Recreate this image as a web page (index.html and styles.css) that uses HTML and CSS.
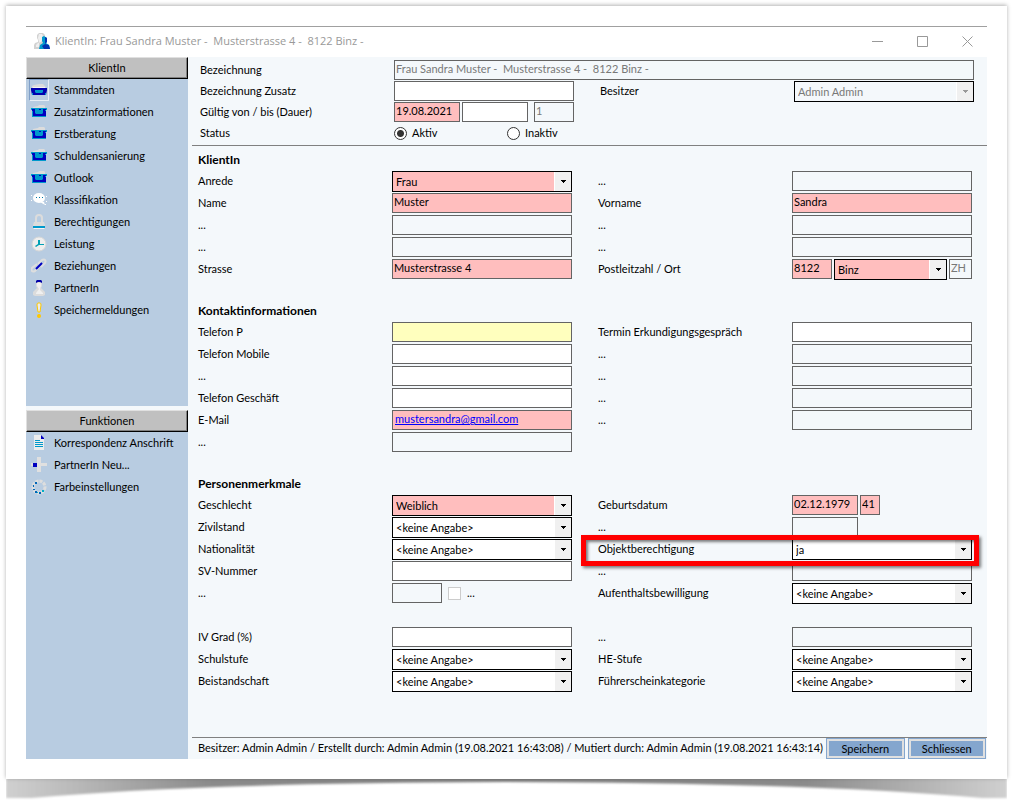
FILE: index.html
```
<!DOCTYPE html>
<html lang="de">
<head>
    <meta charset="UTF-8">
    <meta name="viewport" content="width=device-width, initial-scale=1.0">
    <title>KlientIn: Frau Sandra Muster</title>
    <link rel="stylesheet" href="styles.css">
</head>
<body>
    <svg class="defs" width="0" height="0" aria-hidden="true">
        <symbol id="folder" viewBox="0 0 16 16">
            <path d="M2 4V3l5-1 1-1h5l1 1v2z" fill="#dcdcdc"/>
            <path d="M0 4h16v2h-1v7H1V6H0z" fill="#0099cc"/>
            <path d="M1 5h14v1h-1v1h1v5H2V7H1z" fill="#0000c0"/>
            <path d="M4 5h4v1h2V5h2v4l-1 1H5L4 9z" fill="#0099cc"/>
        </symbol>
        <symbol id="folder-open" viewBox="0 0 16 16">
            <path d="M1 6V4l2-1 5-1h4l2 2 1 2z" fill="#dcdcdc"/>
            <path d="M2 5h12v1H2z" fill="#f4f4f4"/>
            <path d="M0 6h16v2l-1 5H1L0 8z" fill="#0000b0"/>
            <path d="M4 8h8v2l-1 1H5l-1-1zM1 11h1v2H1zM14 11h1v2h-1z" fill="#0099cc"/>
        </symbol>
    </svg>

    <div class="paper">
        <div class="window">
            <header class="titlebar">
                <svg class="app-icon" viewBox="0 0 16 16" aria-hidden="true">
                    <path d="M5 0h4l2 2v4l-1 2 2 2v6H0v-4l1-2 3-1V7L3 5V2z" fill="#d2d2d2"/>
                    <path d="M5 1h3l1 2v3L7 9l-3 1-2 2v2h3V9l-1-4z" fill="#efefef"/>
                    <path d="M8 4l2-1 3 2v4l-1 1 3 2 1 4H5l1-4 3-2-1-2z" fill="#0099cc"/>
                    <path d="M11 4l2 1v4l-1 1-1 1zM11 11l4 1 1 4h-6l-2-3z" fill="#0033b0"/>
                </svg>
                <h1>KlientIn: Frau Sandra Muster -&nbsp; Musterstrasse 4 -&nbsp; 8122 Binz -</h1>
                <div class="window-buttons">
                    <button type="button" aria-label="Minimieren"><svg viewBox="0 0 11 11"><path d="M0 5.500h11"/></svg></button>
                    <button type="button" aria-label="Maximieren"><svg viewBox="0 0 11 11"><path d="M.5.5h10v10H.5z"/></svg></button>
                    <button type="button" aria-label="Fenster schliessen"><svg viewBox="0 0 11 11"><path d="M.5.5l10 10M10.500.5l-10 10"/></svg></button>
                </div>
            </header>

            <div class="body">
                <nav class="sidebar">
                    <section class="panel">
                        <h2>KlientIn</h2>
                        <ul>
                            <li><a href="#" class="active"><svg><use href="#folder-open"/></svg>Stammdaten</a></li>
                            <li><a href="#"><svg><use href="#folder"/></svg>Zusatzinformationen</a></li>
                            <li><a href="#"><svg><use href="#folder"/></svg>Erstberatung</a></li>
                            <li><a href="#"><svg><use href="#folder"/></svg>Schuldensanierung</a></li>
                            <li><a href="#"><svg><use href="#folder"/></svg>Outlook</a></li>
                            <li><a href="#">
                                <svg viewBox="0 0 16 16">
                                    <ellipse cx="8" cy="6" rx="6" ry="5" fill="#fff"/>
                                    <path d="M9 10h4l1 3zM0 3h1v1H0zM0 8h1v1H0zM15 4h1v1h-1zM15 9h1v1h-1zM14 12h1v1h-1z" fill="#fff"/>
                                    <path d="M5 5h1v1H5zM8 5h1v1H8zM11 5h1v1h-1z" fill="#0077a8"/>
                                </svg>Klassifikation</a></li>
                            <li><a href="#">
                                <svg viewBox="0 0 16 16">
                                    <path d="M5 8V4q0-3 3-3t3 3v4" fill="none" stroke="#dcdcdc" stroke-width="2"/>
                                    <path d="M3 8h10l1 3v4H2v-4z" fill="#dcdcdc"/>
                                    <path d="M2 12h12v2H2z" fill="#0099cc"/>
                                    <path d="M3 14h10v1H3z" fill="#f4f4f4"/>
                                </svg>Berechtigungen</a></li>
                            <li><a href="#">
                                <svg viewBox="0 0 16 16">
                                    <circle cx="8" cy="8" r="7" fill="#eee" stroke="#d6d6d6"/>
                                    <path d="M7 4h2v4h4v1H8L5 11l-1-1 3-2z" fill="#00a0b4"/>
                                </svg>Leistung</a></li>
                            <li><a href="#">
                                <svg viewBox="0 0 16 16">
                                    <path d="M7 6l4-4q2-1 3 0t0 3l-4 4M9 8l-5 5q-2 1-3 0t0-3l5-4" fill="none" stroke="#dedede" stroke-width="2"/>
                                    <path d="M5 11l6-6" fill="none" stroke="#0000c0" stroke-width="2"/>
                                </svg>Beziehungen</a></li>
                            <li><a href="#">
                                <svg viewBox="0 0 16 16">
                                    <path d="M5 2h6v4l-1 2 4 4v3l-2 1H4l-2-1v-3l4-4-1-2z" fill="#dcdcdc"/>
                                    <path d="M6 3h4v3L9 8v2l3 3v1H5v-1l3-4-2-3z" fill="#f0f0f0"/>
                                    <path d="M5 3V1l1-1h4l1 1v2l-2-1H7z" fill="#0000a8"/>
                                </svg>PartnerIn</a></li>
                            <li><a href="#">
                                <svg viewBox="0 0 16 16">
                                    <path d="M7 1h2q1 0 1 2L9 10H7L6 3q0-2 1-2z" fill="#ececec" stroke="#ffc800"/>
                                    <circle cx="8" cy="14" r="2" fill="#ffc800"/>
                                </svg>Speichermeldungen</a></li>
                        </ul>
                    </section>
                    <section class="panel">
                        <h2>Funktionen</h2>
                        <ul>
                            <li><a href="#">
                                <svg viewBox="0 0 16 16">
                                    <path d="M3 0h7l3 3v12H3z" fill="#ececec"/>
                                    <path d="M10 0l3 3v1h-3z" fill="#0000c0"/>
                                    <path d="M4 5h5v1H4zM4 7h8v1H4zM4 9h8v1H4zM4 11h8v1H4z" fill="#0099cc"/>
                                </svg>Korrespondenz Anschrift</a></li>
                            <li><a href="#">
                                <svg viewBox="0 0 16 16">
                                    <path d="M6 0h4v6h6v3h-6v6H6V9H0V6h6z" fill="#e0e0e0"/>
                                    <path d="M2 6h4v4H2z" fill="#0000c0"/>
                                </svg>PartnerIn Neu...</a></li>
                            <li><a href="#">
                                <svg viewBox="0 0 16 16">
                                    <circle cx="8" cy="8" r="6" fill="none" stroke="#dedede" stroke-width="3" stroke-dasharray="3 1"/>
                                    <path d="M4 3h2v2H4zM2 6h1v2H2zM2 10h2v1H2zM4 12h2v2H4zM8 13h2v2H8z" fill="#0066b8"/>
                                    <path d="M11 11h2v2h-2zM6 13h1v1H6z" fill="#00b0c8"/>
                                </svg>Farbeinstellungen</a></li>
                        </ul>
                    </section>
                </nav>

                <form class="content">
                    <div class="fields head">
                        <label for="bezeichnung">Bezeichnung</label>
                        <input id="bezeichnung" class="wide" type="text" value="Frau Sandra Muster -&nbsp; Musterstrasse 4 -&nbsp; 8122 Binz -" disabled>

                        <label for="zusatz">Bezeichnung Zusatz</label>
                        <input id="zusatz" type="text">
                        <label for="besitzer" class="second">Besitzer</label>
                        <select id="besitzer" disabled><option>Admin Admin</option></select>

                        <label for="von">Gültig von / bis (Dauer)</label>
                        <div class="group">
                            <input id="von" class="date required" type="text" value="19.08.2021">
                            <input class="date" type="text" aria-label="Gültig bis">
                            <input class="short last" type="text" value="1" aria-label="Dauer" disabled>
                        </div>

                        <span class="label start">Status</span>
                        <div class="radios">
                            <label><input type="radio" name="status" checked>Aktiv</label>
                            <label><input type="radio" name="status">Inaktiv</label>
                        </div>
                    </div>

                    <div class="sections">
                        <section>
                            <h2>KlientIn</h2>
                            <div class="fields">
                                <label for="anrede">Anrede</label>
                                <select id="anrede" class="required"><option>Frau</option></select>
                                <label for="k1" class="second">...</label>
                                <input id="k1" type="text" disabled>

                                <label for="name">Name</label>
                                <input id="name" class="required" type="text" value="Muster">
                                <label for="vorname" class="second">Vorname</label>
                                <input id="vorname" class="required" type="text" value="Sandra">

                                <label for="k2">...</label>
                                <input id="k2" type="text" disabled>
                                <label for="k3" class="second">...</label>
                                <input id="k3" type="text" disabled>

                                <label for="k4">...</label>
                                <input id="k4" type="text" disabled>
                                <label for="k5" class="second">...</label>
                                <input id="k5" type="text" disabled>

                                <label for="strasse">Strasse</label>
                                <input id="strasse" class="required" type="text" value="Musterstrasse 4">
                                <label for="plz" class="second">Postleitzahl / Ort</label>
                                <div class="group">
                                    <input id="plz" class="short required" type="text" value="8122">
                                    <select class="required" aria-label="Ort"><option>Binz</option></select>
                                    <input class="tiny" type="text" value="ZH" aria-label="Kanton" disabled>
                                </div>
                            </div>
                        </section>

                        <section>
                            <h2>Kontaktinformationen</h2>
                            <div class="fields">
                                <label for="telp">Telefon P</label>
                                <input id="telp" class="focus" type="text">
                                <label for="termin" class="second">Termin Erkundigungsgespräch</label>
                                <input id="termin" type="text">

                                <label for="mobile">Telefon Mobile</label>
                                <input id="mobile" type="text">
                                <label for="t1" class="second">...</label>
                                <input id="t1" type="text" disabled>

                                <label for="t2">...</label>
                                <input id="t2" type="text">
                                <label for="t3" class="second">...</label>
                                <input id="t3" type="text" disabled>

                                <label for="telg">Telefon Geschäft</label>
                                <input id="telg" type="text">
                                <label for="t4" class="second">...</label>
                                <input id="t4" type="text" disabled>

                                <label for="email">E-Mail</label>
                                <input id="email" class="required mail" type="email" value="mustersandra@gmail.com">
                                <label for="t5" class="second">...</label>
                                <input id="t5" type="text" disabled>

                                <label for="t6">...</label>
                                <input id="t6" type="text" disabled>
                            </div>
                        </section>

                        <section>
                            <h2>Personenmerkmale</h2>
                            <div class="fields">
                                <label for="geschlecht">Geschlecht</label>
                                <select id="geschlecht" class="required"><option>Weiblich</option></select>
                                <label for="geburt" class="second">Geburtsdatum</label>
                                <div class="group">
                                    <input id="geburt" class="date required" type="text" value="02.12.1979">
                                    <input class="age required" type="text" value="41" aria-label="Alter">
                                </div>

                                <label for="zivil">Zivilstand</label>
                                <select id="zivil"><option>&lt;keine Angabe&gt;</option></select>
                                <label for="p1" class="second">...</label>
                                <input id="p1" class="date" type="text" disabled>

                                <label for="nation">Nationalität</label>
                                <select id="nation"><option>&lt;keine Angabe&gt;</option></select>
                                <div class="marked">
                                    <label for="objekt" class="second">Objektberechtigung</label>
                                    <select id="objekt"><option>ja</option></select>
                                </div>

                                <label for="sv">SV-Nummer</label>
                                <input id="sv" type="text">
                                <label for="p2" class="second">...</label>
                                <input id="p2" type="text" disabled>

                                <label for="p3">...</label>
                                <div class="group">
                                    <input id="p3" class="medium" type="text" disabled>
                                    <label class="check"><input type="checkbox" disabled>...</label>
                                </div>
                                <label for="bewilligung" class="second">Aufenthaltsbewilligung</label>
                                <select id="bewilligung"><option>&lt;keine Angabe&gt;</option></select>

                                <div class="spacer"></div>

                                <label for="iv">IV Grad (%)</label>
                                <input id="iv" type="text">
                                <label for="p4" class="second">...</label>
                                <input id="p4" type="text" disabled>

                                <label for="schule">Schulstufe</label>
                                <select id="schule"><option>&lt;keine Angabe&gt;</option></select>
                                <label for="he" class="second">HE-Stufe</label>
                                <select id="he"><option>&lt;keine Angabe&gt;</option></select>

                                <label for="beistand">Beistandschaft</label>
                                <select id="beistand"><option>&lt;keine Angabe&gt;</option></select>
                                <label for="ausweis" class="second">Führerscheinkategorie</label>
                                <select id="ausweis"><option>&lt;keine Angabe&gt;</option></select>
                            </div>
                        </section>
                    </div>

                    <footer class="statusbar">
                        <p>Besitzer: Admin Admin / Erstellt durch: Admin Admin (19.08.2021 16:43:08) / Mutiert durch: Admin Admin (19.08.2021 16:43:14)</p>
                        <button type="button">Speichern</button>
                        <button type="button">Schliessen</button>
                    </footer>
                </form>
            </div>
        </div>
    </div>
    <svg class="curl" viewBox="0 0 1009 24" preserveAspectRatio="none" aria-hidden="true">
        <defs>
            <linearGradient id="curl-fill">
                <stop offset="0" stop-color="#d0d0d0"/>
                <stop offset=".06" stop-color="#bcbcbc"/>
                <stop offset=".2" stop-color="#8c8c8c"/>
                <stop offset=".5" stop-color="#808080"/>
                <stop offset=".8" stop-color="#8c8c8c"/>
                <stop offset=".94" stop-color="#bcbcbc"/>
                <stop offset="1" stop-color="#d0d0d0"/>
            </linearGradient>
            <filter id="soft" x="-2%" y="-40%" width="104%" height="180%"><feGaussianBlur stdDeviation="1"/></filter>
        </defs>
        <path d="M0 -4H1009V19H984Q820 4 504 3Q190 4 26 19H0z" fill="url(#curl-fill)" filter="url(#soft)"/>
    </svg>
</body>
</html>
```
FILE: styles.css
```
* {
    box-sizing: border-box;
}

body {
    margin: 0;
    padding: 6px 14px 0 6px;
    background: #fff;
    font: 11px/20px "Lato", sans-serif;
    color: #000;
}

h1, h2, p, ul {
    margin: 0;
    padding: 0;
}

input, select, button {
    margin: 0;
    font: inherit;
    color: inherit;
    border-radius: 0;
}

.defs {
    position: absolute;
}

.paper {
    position: relative;
    z-index: 1;
    padding: 20px;
    background: #fff;
    box-shadow: 0 -1px 4px rgba(0, 0, 0, 0.3);
}

.window {
    border-top: 1px solid #a0a0a0;
}

/* title bar */
.titlebar {
    display: flex;
    align-items: center;
    height: 30px;
    padding: 0 0 2px 8px;
}

.titlebar h1 {
    flex: 1;
    margin-left: 5px;
    font: 11px/20px "Open Sans", sans-serif;
    color: #999;
}

.app-icon {
    width: 16px;
    height: 16px;
}

.window-buttons {
    display: flex;
    gap: 5px;
}

.window-buttons button {
    display: flex;
    align-items: center;
    justify-content: center;
    width: 40px;
    height: 28px;
    padding: 0;
    border: none;
    background: none;
}

.window-buttons svg {
    width: 11px;
    height: 11px;
    fill: none;
    stroke: #999;
}

.body {
    display: flex;
    background: #f4f8fb;
}

/* sidebar */
.sidebar {
    display: grid;
    grid-template-rows: 1fr 1fr;
    gap: 4px;
    width: 162px;
    flex-shrink: 0;
}

.panel {
    background: #b8cce1;
}

.panel h2 {
    height: 22px;
    border: 1px solid;
    border-color: #e0e0e0 #000 #000 #e0e0e0;
    background: #c0c0c0;
    box-shadow: inset -1px -1px 0 #808080;
    font-size: inherit;
    font-weight: normal;
    text-align: center;
}

.panel ul {
    list-style: none;
}

.panel a {
    display: flex;
    align-items: center;
    gap: 5px;
    height: 22px;
    padding-left: 3px;
    color: inherit;
    text-decoration: none;
}

.panel svg {
    width: 20px;
    height: 22px;
    padding: 2px 1px;
    border: 1px solid transparent;
}

.panel .active svg {
    border-color: #7f9fc8 #e8eef5 #e8eef5 #7f9fc8;
}

/* form */
.content {
    flex: 1;
    min-width: 0;
    margin-left: 4px;
}

.fields {
    display: grid;
    grid-template-columns: 194px minmax(0, 1fr) 220px minmax(0, 1fr);
    grid-auto-rows: 22px;
    align-items: start;
}

.fields > label, .label {
    white-space: nowrap;
}

.second {
    padding-left: 26px;
}

.start {
    grid-column: 1;
}

.fields > label:not(.second) {
    grid-column: 1;
}

.wide {
    grid-column: 2 / 5;
}

.spacer {
    grid-column: 1 / 5;
}

.head {
    grid-auto-rows: 21px;
    padding: 3px 13px 1px 8px;
    border-bottom: 1px solid #808080;
}

.sections {
    display: grid;
    gap: 19px;
    padding: 3px 15px 44px 6px;
}

.sections h2 {
    font-size: 12px;
    line-height: 22px;
}

input[type="text"], input[type="email"] {
    width: 100%;
    height: 20px;
    padding: 0 1px 2px;
    border: 1px solid #646464;
    background: #fff;
    outline: none;
}

input[type="text"]:disabled {
    background: #f4f8fb;
    color: #787878;
}

/* arrow is three stacked bars on top of the grey button strip */
select {
    --arrow: #000;
    --fill: #fff;
    width: 100%;
    height: 21px;
    padding: 0 20px 0 3px;
    border: 1px solid #000;
    outline: none;
    appearance: none;
    background:
        linear-gradient(var(--arrow), var(--arrow)) right 5px top 8px / 5px 1px no-repeat,
        linear-gradient(var(--arrow), var(--arrow)) right 6px top 9px / 3px 1px no-repeat,
        linear-gradient(var(--arrow), var(--arrow)) right 7px top 10px / 1px 1px no-repeat,
        linear-gradient(#f0f0f0, #f0f0f0) right top / 16px 100% no-repeat,
        linear-gradient(#fff, #fff) right top / 17px 100% no-repeat,
        var(--fill);
}

select:disabled {
    --arrow: #999;
    --fill: #f4f8fb;
    color: #787878;
    opacity: 1;
}

input.required[type] {
    background: #ffbebe;
}

select.required {
    --fill: #ffbebe;
}

input.focus[type] {
    background: #ffffbe;
}

input.mail[type] {
    padding-left: 2px;
    color: #00f;
    text-decoration: underline;
}

.group {
    display: flex;
    gap: 2px;
}

.group select {
    flex: 1;
    min-width: 0;
}

input.date[type] {
    width: 66px;
}

input.short[type] {
    width: 40px;
}

input.medium[type] {
    width: 50px;
}

input.tiny[type] {
    width: 23px;
}

input.age[type] {
    width: 20px;
}

.last {
    margin-left: auto;
}

.radios {
    display: flex;
}

.radios label {
    display: flex;
    flex-shrink: 0;
    align-items: center;
    gap: 5px;
    width: 113px;
}

.radios label:last-child {
    width: auto;
}

input[type="radio"] {
    appearance: none;
    width: 13px;
    height: 13px;
    border: 1px solid #333;
    border-radius: 50%;
    background: #fff;
}

input[type="radio"]:checked {
    background: radial-gradient(circle, #333 3px, #fff 4px);
}

.check {
    display: flex;
    align-items: center;
    gap: 6px;
    margin-left: 4px;
}

input[type="checkbox"] {
    appearance: none;
    width: 13px;
    height: 13px;
    border: 1px solid #ccc;
    background: #fff;
}

.marked {
    position: relative;
    display: grid;
    grid-template-columns: 220px minmax(0, 1fr);
    grid-column: 3 / 5;
}

.marked::after {
    content: "";
    position: absolute;
    z-index: 1;
    inset: -4px -7px -6px 9px;
    border: 5px solid #f00;
    box-shadow: 2px 2px 3px rgba(0, 0, 0, 0.5), inset 2px 2px 3px rgba(0, 0, 0, 0.5);
    pointer-events: none;
}

/* status bar */
.statusbar {
    display: flex;
    gap: 3px;
    height: 22px;
    padding: 0 1px 0 6px;
    border-top: 1px solid #808080;
}

.statusbar p {
    flex: 1;
    white-space: nowrap;
}

.statusbar button {
    width: 80px;
    height: 21px;
    padding: 0;
    border: 1px solid #84a6ce;
    background: #84a6ce;
    box-shadow: inset 0 0 0 2px #e0e0e0;
    line-height: 19px;
}

/* lifted page corners */
.curl {
    display: block;
    width: 100%;
    height: 24px;
}
```
